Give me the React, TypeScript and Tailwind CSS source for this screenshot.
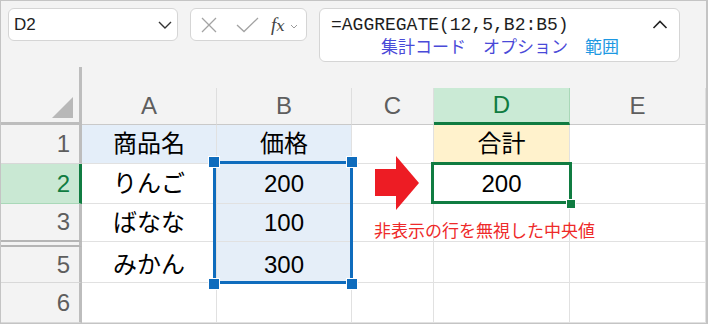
import React from 'react';

// sheet fonts
const cellFont = { fontFamily: '"Liberation Sans", "Noto Sans CJK JP", sans-serif' };
const jpFont = { fontFamily: '"Noto Sans CJK JP", sans-serif' };

const COL_W = ['w-[135px]', 'w-[135px]', 'w-[82px]', 'w-[136px]', 'w-[136px]'];
const LETTERS = ['A', 'B', 'C', 'D', 'E'];

type Row = {
  n: string;
  h: string;
  cells: string[];
  bg: string[];
  active?: boolean;
};

const ROWS: Row[] = [
  { n: '1', h: 'h-[39px]', cells: ['商品名', '価格', '', '合計', ''], bg: ['bg-[#e4eef9]', 'bg-[#e4eef9]', 'bg-white', 'bg-[#fff2cc]', 'bg-white'] },
  { n: '2', h: 'h-[40px]', cells: ['りんご', '200', '', '200', ''], bg: ['bg-white', 'bg-[#e5eef8]', 'bg-white', 'bg-white', 'bg-white'], active: true },
  { n: '3', h: 'h-[38px]', cells: ['ばなな', '100', '', '', ''], bg: ['bg-white', 'bg-[#e5eef8]', 'bg-white', 'bg-white', 'bg-white'] },
  { n: '5', h: 'h-[36px]', cells: ['みかん', '300', '', '', ''], bg: ['bg-white', 'bg-[#e5eef8]', 'bg-white', 'bg-white', 'bg-white'] },
  { n: '6', h: 'h-[40px]', cells: ['', '', '', '', ''], bg: ['bg-white', 'bg-white', 'bg-white', 'bg-white', 'bg-white'] },
];

function Toolbar() {
  return (
    <div className="h-[66px] flex items-start gap-[12px] pl-[7px] pt-[7px]">
      {/* name box */}
      <div className="w-[170px] h-[33px] bg-white border border-[#d5d5d5] rounded-[6px] flex items-center justify-between pl-[5px] pr-[4px]">
        <span className="text-[17px] text-[#222]" style={cellFont}>D2</span>
        <svg width="14" height="8" viewBox="0 0 14 8" className="mr-[1px]">
          <path d="M1 1 L7 7 L13 1" fill="none" stroke="#333" strokeWidth="1.4" />
        </svg>
      </div>

      {/* cancel / enter / fx */}
      <div className="w-[117px] h-[33px] bg-white border border-[#d5d5d5] rounded-[6px] flex items-center pl-[9px]">
        <svg width="18" height="18" viewBox="0 0 18 18">
          <path d="M2 2 L16 16 M16 2 L2 16" stroke="#a3a3a3" strokeWidth="1.3" />
        </svg>
        <svg width="23" height="16" viewBox="0 0 23 16" className="ml-[18px]">
          <path d="M1 8 L8 14.5 L22 1" fill="none" stroke="#a3a3a3" strokeWidth="1.3" />
        </svg>
        <span className="ml-[12px] italic text-[19px] text-[#444] leading-none" style={{ fontFamily: '"Liberation Serif", serif' }}>
          f<span className="text-[15px] not-italic" style={{ fontFamily: '"DejaVu Serif", serif', fontStyle: 'italic' }}>x</span>
        </span>
        <svg width="8" height="5" viewBox="0 0 8 5" className="ml-[5px] mt-[3px]">
          <path d="M1 1 L4 4 L7 1" fill="none" stroke="#9a9a9a" strokeWidth="1" />
        </svg>
      </div>

      {/* formula bar */}
      <div className="relative w-[361px] h-[54px] bg-white border border-[#d5d5d5] rounded-[6px] pl-[11px] pt-[5px]">
        <div className="text-[18px] leading-[22px] text-[#1e1e1e]" style={{ fontFamily: '"Liberation Mono", "DejaVu Sans Mono", monospace' }}>
          =AGGREGATE(12,5,B2:B5)
        </div>
        <div className="ml-[50px] flex gap-[17px] text-[17px] leading-[20px]" style={jpFont}>
          <span className="text-[#4a4ad8]">集計コード</span>
          <span className="text-[#4a4ad8]">オプション</span>
          <span className="text-[#1c98e2]">範囲</span>
        </div>
        <svg width="16" height="9" viewBox="0 0 16 9" className="absolute right-[11px] top-[11px]">
          <path d="M1.5 8 L8 1.5 L14.5 8" fill="none" stroke="#222" strokeWidth="1.6" />
        </svg>
      </div>
    </div>
  );
}

function HeaderRow() {
  return (
    <div className="flex h-[58px]">
      <div className="relative w-[81px] border-r-[3px] border-b-[3px] border-[#bdbdbd]">
        <svg width="21" height="21" viewBox="0 0 21 21" className="absolute right-[6px] bottom-[4px]">
          <polygon points="21,0 21,21 0,21" fill="#b8b8b8" />
        </svg>
      </div>
      {LETTERS.map((l, i) => (
        <div key={l} className={`${COL_W[i]} flex flex-col justify-end`}>
          {l === 'D' ? (
            <div className="h-[37px] bg-[#caead5] border-r border-[#a9d8b8] border-b-[3px] border-b-[#107c41] flex items-center justify-center text-[24px] text-[#107c41]" style={cellFont}>
              {l}
            </div>
          ) : (
            <div className="h-[37px] border-r border-[#dedede] border-b border-b-[#c9c9c9] flex items-center justify-center text-[24px] text-[#5e5e5e]" style={cellFont}>
              {l}
            </div>
          )}
        </div>
      ))}
    </div>
  );
}

function DataRow({ row }: { row: Row }) {
  const headBase = 'w-[81px] flex items-center justify-end pr-[9px] text-[24px] border-r-[3px]';
  const headCls = row.active
    ? `${headBase} bg-[#c9e8d3] text-[#107c41] border-r-[#107c41] border-b border-b-[#a9d8b8]`
    : row.n === '3'
      ? `${headBase} text-[#5e5e5e] border-r-[#bdbdbd] border-b-2 border-b-[#b5b5b5]`
      : `${headBase} text-[#5e5e5e] border-r-[#bdbdbd] border-b border-b-[#d8d8d8]`;
  return (
    <div className={`flex ${row.h}`}>
      <div className={headCls} style={cellFont}>{row.n}</div>
      {row.cells.map((c, i) => (
        <div
          key={i}
          className={`${COL_W[i]} ${row.bg[i]} border-r border-b border-[#e1e1e1] flex items-center justify-center text-[24px] text-black`}
          style={cellFont}
        >
          {c}
        </div>
      ))}
    </div>
  );
}

// hidden row 4: double line in the row header
function HiddenStrip() {
  return (
    <div className="flex h-[5px]">
      <div className="w-[81px] border-r-[3px] border-r-[#bdbdbd] border-b-2 border-b-[#b5b5b5]" />
      {COL_W.map((w, i) => (
        <div key={i} className={`${w} ${i === 1 ? 'bg-[#e5eef8]' : 'bg-white'} border-r border-[#e1e1e1]`} />
      ))}
    </div>
  );
}

function Sheet() {
  return (
    <div className="relative">
      <HeaderRow />
      <DataRow row={ROWS[0]} />
      <DataRow row={ROWS[1]} />
      <DataRow row={ROWS[2]} />
      <HiddenStrip />
      <DataRow row={ROWS[3]} />
      <DataRow row={ROWS[4]} />

      {/* B2:B5 selection */}
      <div className="absolute left-[212px] top-[94px] w-[140px] h-[123px] border-[3px] border-[#0f6cbd]" />
      <div className="absolute left-[207px] top-[89px] w-[12px] h-[12px] bg-[#0f6cbd] border border-white" />
      <div className="absolute left-[345px] top-[89px] w-[12px] h-[12px] bg-[#0f6cbd] border border-white" />
      <div className="absolute left-[207px] top-[211px] w-[12px] h-[12px] bg-[#0f6cbd] border border-white" />
      <div className="absolute left-[345px] top-[211px] w-[12px] h-[12px] bg-[#0f6cbd] border border-white" />

      {/* active cell D2 */}
      <div className="absolute left-[430px] top-[95px] w-[141px] h-[42px] border-[3px] border-[#107c41]" />
      <div className="absolute left-[565px] top-[132px] w-[10px] h-[10px] bg-[#107c41] border border-white" />

      {/* red arrow */}
      <svg width="44" height="54" viewBox="0 0 44 54" className="absolute left-[374px] top-[89px]">
        <rect x="0" y="13" width="22" height="27" fill="#ed1c24" />
        <polygon points="21,0 44,27 21,54" fill="#ed1c24" />
      </svg>

      {/* note */}
      <div className="absolute left-[373px] top-[154px] text-[17px] leading-[18px] whitespace-nowrap text-[#ee2a2a]" style={jpFont}>
        非表示の行を無視した中央値
      </div>
    </div>
  );
}

export default function App() {
  return (
    <div className="w-[708px] h-[324px] overflow-hidden bg-[#f3f3f3] border-t border-l border-b border-r-2 border-[#c4c4c4]">
      <Toolbar />
      <Sheet />
    </div>
  );
}
